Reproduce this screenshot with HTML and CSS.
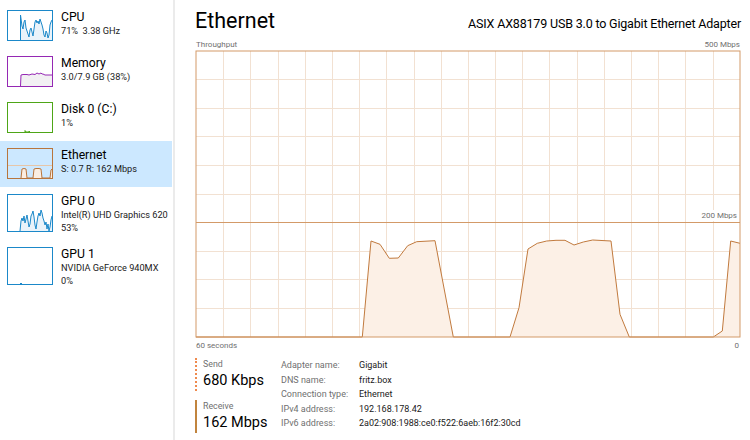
FILE: index.html
```html
<!DOCTYPE html>
<html>
<head>
<meta charset="utf-8">
<link rel="stylesheet" href="styles.css">
</head>
<body>
<div class="app">
  <nav class="sidebar">
    <div class="item">
      <svg class="thumb cpu" viewBox="0 0 46 31" preserveAspectRatio="none">
        <polygon class="fill-blue" points="13.5,30 13.5,5 15,16 16,19 17,12 18,10 19,18 21,24 22,27 23,20 24,18 26,26 28,12 29,10 30,13 31,11 32,14 33,9 34,12 35,15 36,19 37,25 38,27 39,21 40,23 41,28 42,25 43,15 44,12 45,10 45,30"/>
        <polyline class="line-blue" points="13.5,30 13.5,5 15,16 16,19 17,12 18,10 19,18 21,24 22,27 23,20 24,18 26,26 28,12 29,10 30,13 31,11 32,14 33,9 34,12 35,15 36,19 37,25 38,27 39,21 40,23 41,28 42,25 43,15 44,12 45,10"/>
        <rect class="frame-blue" x="0.5" y="0.5" width="45" height="30"/>
      </svg>
      <div class="info">
        <div class="name">CPU</div>
        <div class="sub">71%&nbsp; 3.38 GHz</div>
      </div>
    </div>
    <div class="item">
      <svg class="thumb" viewBox="0 0 46 31" preserveAspectRatio="none">
        <polygon class="fill-purple" points="13.5,30 14,19 16,18.5 20,18.5 22,19 25,18 28,18.5 30,17 32,18 34,17 35,18 36,18 38,19 45,19 45,30"/>
        <polyline class="line-purple" points="13.5,30 14,19 16,18.5 20,18.5 22,19 25,18 28,18.5 30,17 32,18 34,17 35,18 36,18 38,19 45,19"/>
        <rect class="frame-purple" x="0.5" y="0.5" width="45" height="30"/>
      </svg>
      <div class="info">
        <div class="name">Memory</div>
        <div class="sub">3.0/7.9 GB (38%)</div>
      </div>
    </div>
    <div class="item">
      <svg class="thumb" viewBox="0 0 46 31" preserveAspectRatio="none">
        <polyline class="line-green" points="18,30 18,28.5 19,30 22,30 22,29 23,30"/>
        <rect class="frame-green" x="0.5" y="0.5" width="45" height="30"/>
      </svg>
      <div class="info">
        <div class="name">Disk 0 (C:)</div>
        <div class="sub">1%</div>
      </div>
    </div>
    <div class="item selected">
      <svg class="thumb" viewBox="0 0 46 31" preserveAspectRatio="none">
        <line class="mid-orange" x1="0" y1="17.5" x2="46" y2="17.5"/>
        <polygon class="fill-orange" points="14,30 15,21 17,20.5 19,21 20,30 26,30 27,21 29,20.5 32,20.5 34,21 35,30 43,30 44,22 45,21 45,30"/>
        <polyline class="line-orange" points="14,30 15,21 17,20.5 19,21 20,30 26,30 27,21 29,20.5 32,20.5 34,21 35,30 43,30 44,22 45,21"/>
        <rect class="frame-orange" x="0.5" y="0.5" width="45" height="30"/>
      </svg>
      <div class="info">
        <div class="name">Ethernet</div>
        <div class="sub">S: 0.7 R: 162 Mbps</div>
      </div>
    </div>
    <div class="item tall">
      <svg class="thumb tall" viewBox="0 0 46 38" preserveAspectRatio="none">
        <polygon class="fill-blue" points="13,37 14,27 15,24 16,27 17,22 18,29 19,25 20,21 21,27 22,33 23,30 24,22 25,20 26,17 27,23 28,31 29,35 30,28 31,22 32,19 33,22 34,16 35,19 36,24 37,27 38,31 39,28 40,35 41,30 42,37 43,33 44,26 45,22 45,37"/>
        <polyline class="line-blue" points="13,37 14,27 15,24 16,27 17,22 18,29 19,25 20,21 21,27 22,33 23,30 24,22 25,20 26,17 27,23 28,31 29,35 30,28 31,22 32,19 33,22 34,16 35,19 36,24 37,27 38,31 39,28 40,35 41,30 42,37 43,33 44,26 45,22"/>
        <rect class="frame-blue" x="0.5" y="0.5" width="45" height="37"/>
      </svg>
      <div class="info">
        <div class="name">GPU 0</div>
        <div class="sub">Intel(R) UHD Graphics 620</div>
        <div class="sub">53%</div>
      </div>
    </div>
    <div class="item tall">
      <svg class="thumb tall" viewBox="0 0 46 38" preserveAspectRatio="none">
        <line class="line-blue" x1="13" y1="36.5" x2="15" y2="36.5"/>
        <rect class="frame-blue" x="0.5" y="0.5" width="45" height="37"/>
      </svg>
      <div class="info">
        <div class="name">GPU 1</div>
        <div class="sub">NVIDIA GeForce 940MX</div>
        <div class="sub">0%</div>
      </div>
    </div>
  </nav>

  <main class="main">
    <header class="head">
      <h1 class="title">Ethernet</h1>
      <div class="adapter">ASIX AX88179 USB 3.0 to Gigabit Ethernet Adapter</div>
    </header>
    <div class="axis-top">
      <span>Throughput</span>
      <span>500 Mbps</span>
    </div>
    <div class="chart">
      <svg class="chart-svg" width="546" height="288" viewBox="0 0 546 288">
        <g class="grid">
          <line x1="28.5" y1="1" x2="28.5" y2="287"/>
          <line x1="55.5" y1="1" x2="55.5" y2="287"/>
          <line x1="83.5" y1="1" x2="83.5" y2="287"/>
          <line x1="110.5" y1="1" x2="110.5" y2="287"/>
          <line x1="137.5" y1="1" x2="137.5" y2="287"/>
          <line x1="164.5" y1="1" x2="164.5" y2="287"/>
          <line x1="191.5" y1="1" x2="191.5" y2="287"/>
          <line x1="219.5" y1="1" x2="219.5" y2="287"/>
          <line x1="246.5" y1="1" x2="246.5" y2="287"/>
          <line x1="273.5" y1="1" x2="273.5" y2="287"/>
          <line x1="300.5" y1="1" x2="300.5" y2="287"/>
          <line x1="327.5" y1="1" x2="327.5" y2="287"/>
          <line x1="354.5" y1="1" x2="354.5" y2="287"/>
          <line x1="382.5" y1="1" x2="382.5" y2="287"/>
          <line x1="409.5" y1="1" x2="409.5" y2="287"/>
          <line x1="436.5" y1="1" x2="436.5" y2="287"/>
          <line x1="463.5" y1="1" x2="463.5" y2="287"/>
          <line x1="490.5" y1="1" x2="490.5" y2="287"/>
          <line x1="518.5" y1="1" x2="518.5" y2="287"/>
          <line x1="1" y1="29.5" x2="545" y2="29.5"/>
          <line x1="1" y1="58.5" x2="545" y2="58.5"/>
          <line x1="1" y1="86.5" x2="545" y2="86.5"/>
          <line x1="1" y1="115.5" x2="545" y2="115.5"/>
          <line x1="1" y1="144.5" x2="545" y2="144.5"/>
          <line x1="1" y1="201.5" x2="545" y2="201.5"/>
          <line x1="1" y1="229.5" x2="545" y2="229.5"/>
          <line x1="1" y1="258.5" x2="545" y2="258.5"/>
        </g>
        <polygon class="area" points="167.3,287 176,191 185,194.3 194.3,208.3 203.3,208 212.7,195.7 221.7,191.7 240,190.7 258.3,287 315,287 324,257.7 333,199 342.3,193.3 351.7,191 361,190.3 370,190.3 379,195 388.3,192 397.7,190 416,191 425,264.3 434.3,287 518.3,287 527.3,281 535.7,191 545,193.3 545,287"/>
        <polyline class="trace" points="1,287 167.3,287 176,191 185,194.3 194.3,208.3 203.3,208 212.7,195.7 221.7,191.7 240,190.7 258.3,287 315,287 324,257.7 333,199 342.3,193.3 351.7,191 361,190.3 370,190.3 379,195 388.3,192 397.7,190 416,191 425,264.3 434.3,287 518.3,287 527.3,281 535.7,191 545,193.3"/>
        <line class="limit" x1="1" y1="172.5" x2="545" y2="172.5"/>
        <rect class="border" x="1" y="1" width="544" height="286"/>
      </svg>
      <span class="limit-label">200 Mbps</span>
    </div>
    <div class="axis-bottom">
      <span>60 seconds</span>
      <span>0</span>
    </div>

    <section class="stats">
      <div class="rates">
        <div class="rate send">
          <div class="rate-label">Send</div>
          <div class="rate-value">680 Kbps</div>
        </div>
        <div class="rate receive">
          <div class="rate-label">Receive</div>
          <div class="rate-value">162 Mbps</div>
        </div>
      </div>
      <dl class="props">
        <dt>Adapter name:</dt><dd>Gigabit</dd>
        <dt>DNS name:</dt><dd>fritz.box</dd>
        <dt>Connection type:</dt><dd>Ethernet</dd>
        <dt>IPv4 address:</dt><dd>192.168.178.42</dd>
        <dt>IPv6 address:</dt><dd>2a02:908:1988:ce0:f522:6aeb:16f2:30cd</dd>
      </dl>
    </section>
  </main>
</div>
</body>
</html>
```

FILE: styles.css
```css
* { box-sizing: border-box; }

html, body {
  margin: 0;
  padding: 0;
  background: #ffffff;
}

body {
  font-family: Roboto, "Noto Sans", sans-serif;
  color: #1a1a1a;
  width: 750px;
  height: 440px;
  overflow: hidden;
}

.app {
  display: flex;
  height: 440px;
}

/* ---------- sidebar ---------- */
.sidebar {
  width: 175px;
  flex: none;
  padding: 3px 1px 0 0;
  border-right: 2px solid #ebebeb;
}

.item {
  display: flex;
  align-items: flex-start;
  gap: 8px;
  height: 46px;
  padding: 7px 0 0 7px;
}

.item.tall { height: 53px; }

.item.selected {
  background: #cce8ff;
}

.thumb {
  width: 46px;
  height: 31px;
  flex: none;
  display: block;
}

.thumb.tall { height: 38px; }

.info {
  display: flex;
  flex-direction: column;
  white-space: nowrap;
}

.name {
  font-size: 12.2px;
  line-height: 14px;
  color: #000;
}

.sub {
  font-size: 9.2px;
  line-height: 13px;
  color: #1a1a1a;
}

.frame-blue { fill: none; stroke: #1b88c9; stroke-width: 1; }
.line-blue { fill: none; stroke: #1b88c9; stroke-width: 1; }
.fill-blue { fill: #eaf3fa; }

.frame-purple { fill: none; stroke: #9528b4; stroke-width: 1; }
.line-purple { fill: none; stroke: #9528b4; stroke-width: 1; }
.fill-purple { fill: #f2f0f3; }

.frame-green { fill: none; stroke: #4ea617; stroke-width: 1; }
.line-green { fill: none; stroke: #4ea617; stroke-width: 1; }

.frame-orange { fill: none; stroke: #b8753c; stroke-width: 1; }
.line-orange { fill: none; stroke: #b8753c; stroke-width: 1; }
.fill-orange { fill: #fbeee2; }
.mid-orange { stroke: #e7c6a8; stroke-width: 1; }

/* ---------- main ---------- */
.main {
  flex: 1;
  padding: 6px 9px 0 20px;
  display: flex;
  flex-direction: column;
}

.main > * { flex: none; }

.head {
  display: flex;
  justify-content: space-between;
  align-items: baseline;
  height: 33px;
}

.title {
  margin: 0;
  font-weight: 400;
  font-size: 21.5px;
  line-height: 30px;
  color: #000;
}

.adapter {
  font-size: 12.5px;
  letter-spacing: -0.18px;
  color: #000;
}

.axis-top,
.axis-bottom {
  display: flex;
  justify-content: space-between;
  font-size: 8px;
  line-height: 11px;
  color: #707070;
}

.axis-top { padding: 0 1px 0 1px; }
.axis-bottom { padding: 2px 2px 0 1px; }

.chart {
  position: relative;
  height: 288px;
}

.chart-svg { display: block; }

.grid line { stroke: #f2e1d2; stroke-width: 1; }
.area { fill: #fcf0e6; }
.trace { fill: none; stroke: #c17a3e; stroke-width: 1; }
.limit { stroke: #d39a68; stroke-width: 1; }
.border { fill: none; stroke: #d39a68; stroke-width: 1; }

.limit-label {
  position: absolute;
  right: 4px;
  top: 160px;
  font-size: 8px;
  color: #707070;
  background: #ffffff;
  line-height: 11px;
}

/* ---------- stats ---------- */
.stats {
  display: flex;
  gap: 14px;
  margin-top: 7px;
}

.rates {
  width: 72px;
  display: flex;
  flex-direction: column;
  gap: 9px;
  white-space: nowrap;
}

.rate {
  padding-left: 6px;
}

.rate.send { border-left: 2px dotted #ef8a4e; }
.rate.receive { border-left: 2px solid #c1843e; }

.rate-label {
  font-size: 8.8px;
  line-height: 13px;
  color: #707070;
}

.rate-value {
  font-size: 14.5px;
  line-height: 20px;
  color: #000;
}

.props {
  margin: 0;
  display: grid;
  grid-template-columns: 78px auto;
  grid-auto-rows: 14.6px;
  font-size: 9px;
  line-height: 14.6px;
  white-space: nowrap;
}

.props dt { color: #707070; }
.props dd { margin: 0; color: #1a1a1a; }
```
